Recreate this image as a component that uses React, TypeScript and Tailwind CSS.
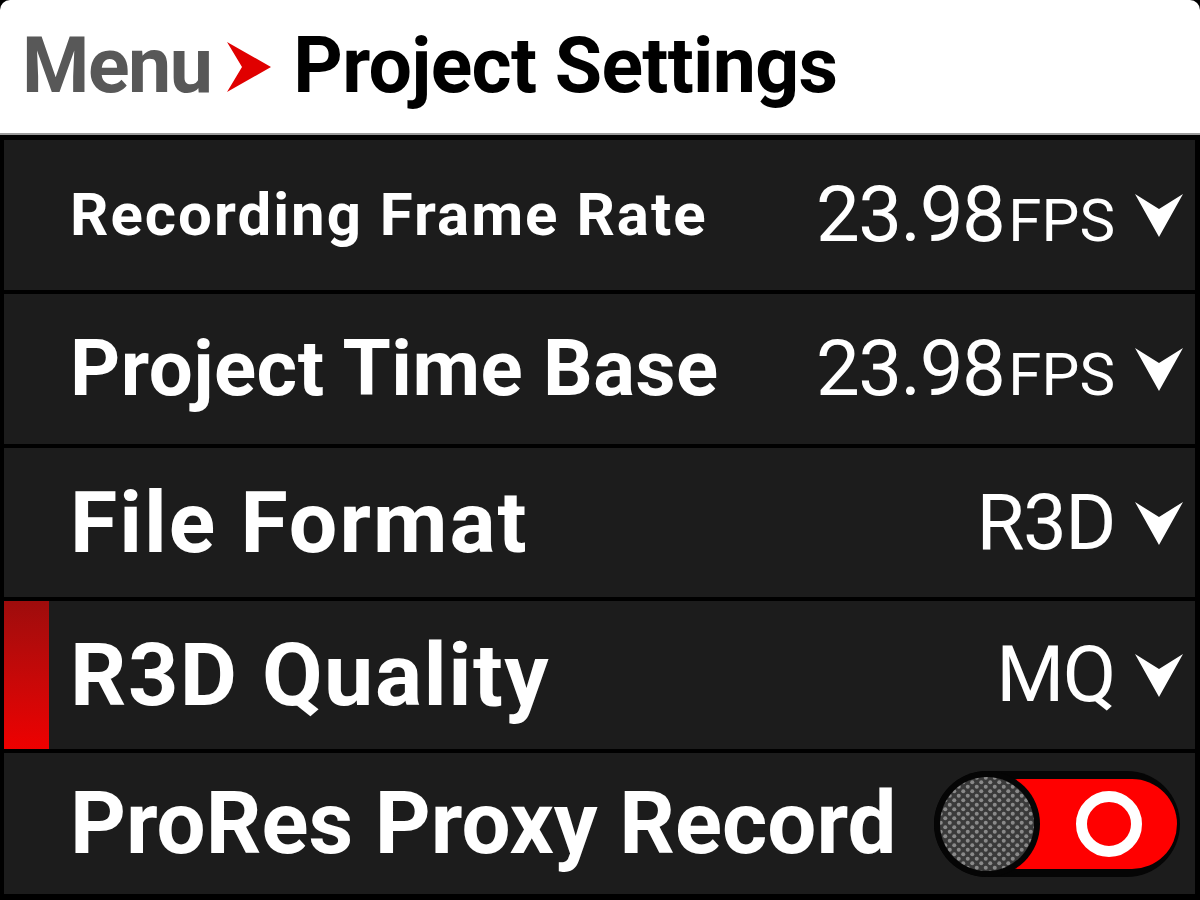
import React from "react";

const font = { fontFamily: "Roboto, 'Noto Sans', sans-serif" };

function DownChevron() {
  return (
    <svg width="48" height="46" viewBox="0 0 48 46" className="shrink-0">
      <path d="M0 2 L24 17 L48 2 L24 45 Z" fill="#ffffff" strokeLinejoin="round" />
    </svg>
  );
}

function Toggle() {
  return (
    <svg width="246" height="106" viewBox="0 0 246 106" className="shrink-0">
      <defs>
        <pattern id="dots" width="9" height="9" patternUnits="userSpaceOnUse">
          <rect width="9" height="9" fill="#3a3a3a" />
          <circle cx="2.25" cy="2.25" r="2" fill="#8a8a8a" />
          <circle cx="6.75" cy="6.75" r="2" fill="#8a8a8a" />
        </pattern>
      </defs>
      <rect x="0" y="0" width="246" height="106" rx="53" fill="#050505" />
      <rect x="40" y="8" width="203" height="90" rx="45" fill="#ff0000" />
      <circle cx="53" cy="53" r="53" fill="#050505" />
      <circle cx="53" cy="53" r="47" fill="url(#dots)" />
      <circle cx="175" cy="53" r="27.5" fill="none" stroke="#ffffff" strokeWidth="11" />
    </svg>
  );
}

function Value({ main, unit }: { main: string; unit?: string }) {
  return (
    <div className="flex items-center gap-[20px]">
      <div className="flex items-baseline text-white font-normal leading-none">
        <span className="text-[78px] tracking-[-1.5px]">{main}</span>
        {unit && <span className="text-[60px] ml-[4px]">{unit}</span>}
      </div>
      <DownChevron />
    </div>
  );
}

export default function App() {
  return (
    <div className="w-[1200px] h-[900px] bg-black overflow-hidden flex flex-col" style={font}>
      <div className="h-[133px] bg-white rounded-t-[10px] flex items-center pl-[22px] shrink-0">
        <span className="text-[77px] font-bold text-[#585858] leading-none tracking-[-1.5px]">Menu</span>
        <svg width="44" height="50" viewBox="0 0 44 50" className="ml-[16px] mr-[22px]">
          <path d="M0 0 L44 25 L0 50 L15 25 Z" fill="#e00000" />
        </svg>
        <span className="text-[77px] font-bold text-black leading-none tracking-[-0.7px]">Project Settings</span>
      </div>
      <div className="h-[2px] bg-[#9a9a9a] shrink-0" />
      <div className="flex-1 flex flex-col gap-[4px] pt-[5px] pl-[4px] pr-[5px]">
        <div className="h-[150px] bg-[#1c1c1c] flex items-center justify-between pl-[66px] pr-[12px] shrink-0">
          <span className="text-[60px] font-bold text-white leading-none tracking-[2px]">Recording Frame Rate</span>
          <Value main="23.98" unit="FPS" />
        </div>
        <div className="h-[150px] bg-[#1c1c1c] flex items-center justify-between pl-[66px] pr-[12px] shrink-0">
          <span className="text-[78px] font-bold text-white leading-none tracking-[0.5px]">Project Time Base</span>
          <Value main="23.98" unit="FPS" />
        </div>
        <div className="h-[149px] bg-[#1c1c1c] flex items-center justify-between pl-[66px] pr-[12px] shrink-0">
          <span className="text-[86px] font-bold text-white leading-none tracking-[2px]">File Format</span>
          <Value main="R3D" />
        </div>
        <div className="h-[148px] bg-[#1c1c1c] flex items-center justify-between pr-[12px] shrink-0">
          <div className="flex items-center h-full">
            <div className="w-[45px] h-full bg-gradient-to-b from-[#9e0c0c] to-[#ee0000]" />
            <span className="ml-[21px] text-[88px] font-bold text-white leading-none tracking-[1.5px]">R3D Quality</span>
          </div>
          <Value main="MQ" />
        </div>
        <div className="h-[141px] bg-[#1c1c1c] flex items-center justify-between pl-[66px] pr-[15px] shrink-0">
          <span className="text-[87px] font-bold text-white leading-none">ProRes Proxy Record</span>
          <Toggle />
        </div>
      </div>
    </div>
  );
}
